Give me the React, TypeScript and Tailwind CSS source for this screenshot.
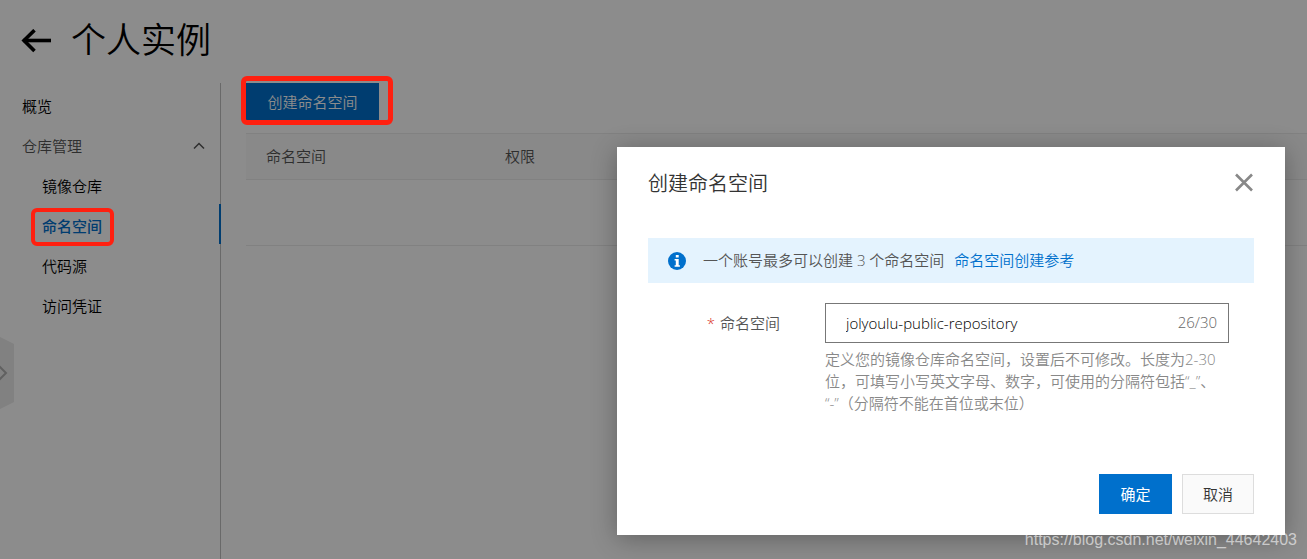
import React, { useState } from "react";

const MAX_LENGTH = 30;

function BackArrow() {
  return (
    <svg viewBox="0 0 32 24" className="h-6 w-8" fill="none" stroke="currentColor" strokeWidth="3.6">
      <path d="M3.5 11.5H31" />
      <path d="M14.5 1.2L4 11.5l10.500 10.500" />
    </svg>
  );
}

function Highlight({ className }: { className: string }) {
  return (
    <span
      aria-hidden="true"
      className={`pointer-events-none absolute z-20 rounded-md border-[#ff2010] ${className}`}
    />
  );
}

function Sidebar() {
  const item = "flex h-10 items-center pt-1";
  return (
    <nav className="w-[221px] shrink-0 border-r border-[#c0c0c0] pt-px text-[15px] text-black">
      <a href="#overview" className={`${item} pl-[22px]`}>
        概览
      </a>
      <button type="button" aria-expanded="true" className={`${item} w-full justify-between pr-[15px] pl-[22px] text-[#555]`}>
        仓库管理
        <svg viewBox="0 0 12 8" className="h-2 w-3" fill="none" stroke="#555" strokeWidth="1.5">
          <path d="M1 6.500l5-5 5 5" />
        </svg>
      </button>
      <a href="#images" className={`${item} pl-[42px]`}>
        镜像仓库
      </a>
      <a
        href="#namespaces"
        aria-current="page"
        className={`${item} relative -mr-px border-r-2 border-[#0070cc] pl-[42px] font-medium text-[#0070cc]`}
      >
        命名空间
        <Highlight className="top-1 left-[31px] h-[38px] w-[83px] border-4" />
      </a>
      <a href="#source" className={`${item} pl-[42px]`}>
        代码源
      </a>
      <a href="#credentials" className={`${item} pl-[42px]`}>
        访问凭证
      </a>
    </nav>
  );
}

function NamespaceList() {
  return (
    <main className="min-w-0 flex-1 pl-[25px]">
      <div className="relative flex">
        <button type="button" className="h-10 w-[133px] bg-[#0070cc] pb-0.5 text-[15px] text-white">
          创建命名空间
        </button>
        <Highlight className="-top-[7px] -left-[5px] h-[49px] w-[152px] border-[5px]" />
      </div>
      <table className="mt-[10px] w-full table-fixed border-collapse text-left text-[15px] text-[#555]">
        <thead>
          <tr className="h-[46px] border-y border-[#ebebeb] bg-[#f9f9f9]">
            <th className="w-[239px] pl-5 font-[350]">命名空间</th>
            <th className="pl-5 font-[350]">权限</th>
          </tr>
        </thead>
        <tbody>
          <tr className="h-[66px] border-b border-[#ebebeb]">
            <td colSpan={2} />
          </tr>
        </tbody>
      </table>
    </main>
  );
}

function CreateDialog() {
  const [name, setName] = useState("jolyoulu-public-repository");
  return (
    <div
      role="dialog"
      aria-labelledby="dialog-title"
      className="w-[668px] bg-white px-[31px] pt-[22px] pb-[21px] shadow-[0_4px_24px_rgba(0,0,0,0.3)]"
    >
      <div className="flex h-7 items-center justify-between">
        <h2 id="dialog-title" className="pt-0.5 text-[20px] text-[#333]">
          创建命名空间
        </h2>
        <button type="button" aria-label="关闭" className="text-[#888]">
          <svg viewBox="0 0 20 20" className="h-5 w-5" fill="none" stroke="currentColor" strokeWidth="2.6">
            <path d="M2 1.500l16 16M18 1.500L2 17.500" />
          </svg>
        </button>
      </div>

      <div className="mt-[41px] flex h-[45px] items-center bg-[#e4f3fe] pl-5 text-[15px] text-[#555]">
        <svg viewBox="0 0 18 18" className="mr-[17px] h-[18px] w-[18px]" aria-hidden="true">
          <circle cx="9" cy="9" r="9" fill="#0070cc" />
          <path d="M7.8 3h2.9v2.6H7.8zM6.6 7h4.1v6.2h1.2v1.6H6.6v-1.6h1.2V8.6H6.6z" fill="#fff" />
        </svg>
        一个账号最多可以创建 3 个命名空间
        <a href="#guide" className="ml-[10px] text-[#0070cc]">
          命名空间创建参考
        </a>
      </div>

      <div className="mt-5 flex gap-[45px] pr-[25px] text-[15px]">
        <label htmlFor="namespace" className="flex h-10 w-[132px] shrink-0 items-center justify-end gap-[5px] text-[#555]">
          <span className="text-[#d93026]">*</span>
          命名空间
        </label>
        <div className="min-w-0 flex-1">
          <div className="flex h-10 items-center border border-[#777] pr-[11px] pl-5">
            <input
              id="namespace"
              value={name}
              maxLength={MAX_LENGTH}
              onChange={(e) => setName(e.target.value)}
              className="min-w-0 flex-1 font-light text-black outline-none"
            />
            <span className="pb-0.5 font-light text-[#666]">
              {name.length}/{MAX_LENGTH}
            </span>
          </div>
          <p className="mt-[5px] leading-[22px] text-[#888] [text-spacing-trim:space-all]">
            定义您的镜像仓库命名空间，设置后不可修改。长度为2-30位，可填写小写英文字母、数字，可使用的分隔符包括“_”、
            <wbr />
            <span className="whitespace-nowrap">“-”（分隔符不能在首位或末位）</span>
          </p>
        </div>
      </div>

      <div className="mt-[60px] flex justify-end gap-[10px] text-[15px]">
        <button type="button" className="h-10 w-[73px] bg-[#0070cc] font-normal text-white">
          确定
        </button>
        <button type="button" className="h-10 w-[72px] border border-[#ddd] bg-[#fafafa] text-[#333]">
          取消
        </button>
      </div>
    </div>
  );
}

export default function App() {
  return (
    <div
      lang="zh-CN"
      className="relative flex min-h-screen flex-col bg-white font-['Open_Sans','Noto_Sans_CJK_SC',sans-serif] font-[350]"
    >
      <header className="flex h-[83px] items-center gap-[19px] pb-0.5 pl-5 text-black">
        <button type="button" aria-label="返回">
          <BackArrow />
        </button>
        <h1 className="text-[35px] font-[350]">个人实例</h1>
      </header>
      <div className="flex flex-1">
        <Sidebar />
        <NamespaceList />
      </div>

      <button type="button" aria-label="展开菜单" className="absolute top-[337px] left-0">
        <svg viewBox="0 0 14 72" className="h-[72px] w-[14px]" fill="none">
          <path d="M0 0l14 7v58L0 72z" fill="#ebebeb" />
          <path d="M-1 29l7 7-7 7" stroke="#b0b0b0" strokeWidth="2" />
        </svg>
      </button>

      <div className="absolute inset-0 z-10 flex items-start justify-end bg-black/45 pt-[147px] pr-[22px]">
        <CreateDialog />
      </div>

      <span className="absolute right-[10px] bottom-[9px] z-20 font-['Liberation_Sans',sans-serif] text-[16px] leading-5 font-normal text-white/60">
        https://blog.csdn.net/weixin_44642403
      </span>
    </div>
  );
}
